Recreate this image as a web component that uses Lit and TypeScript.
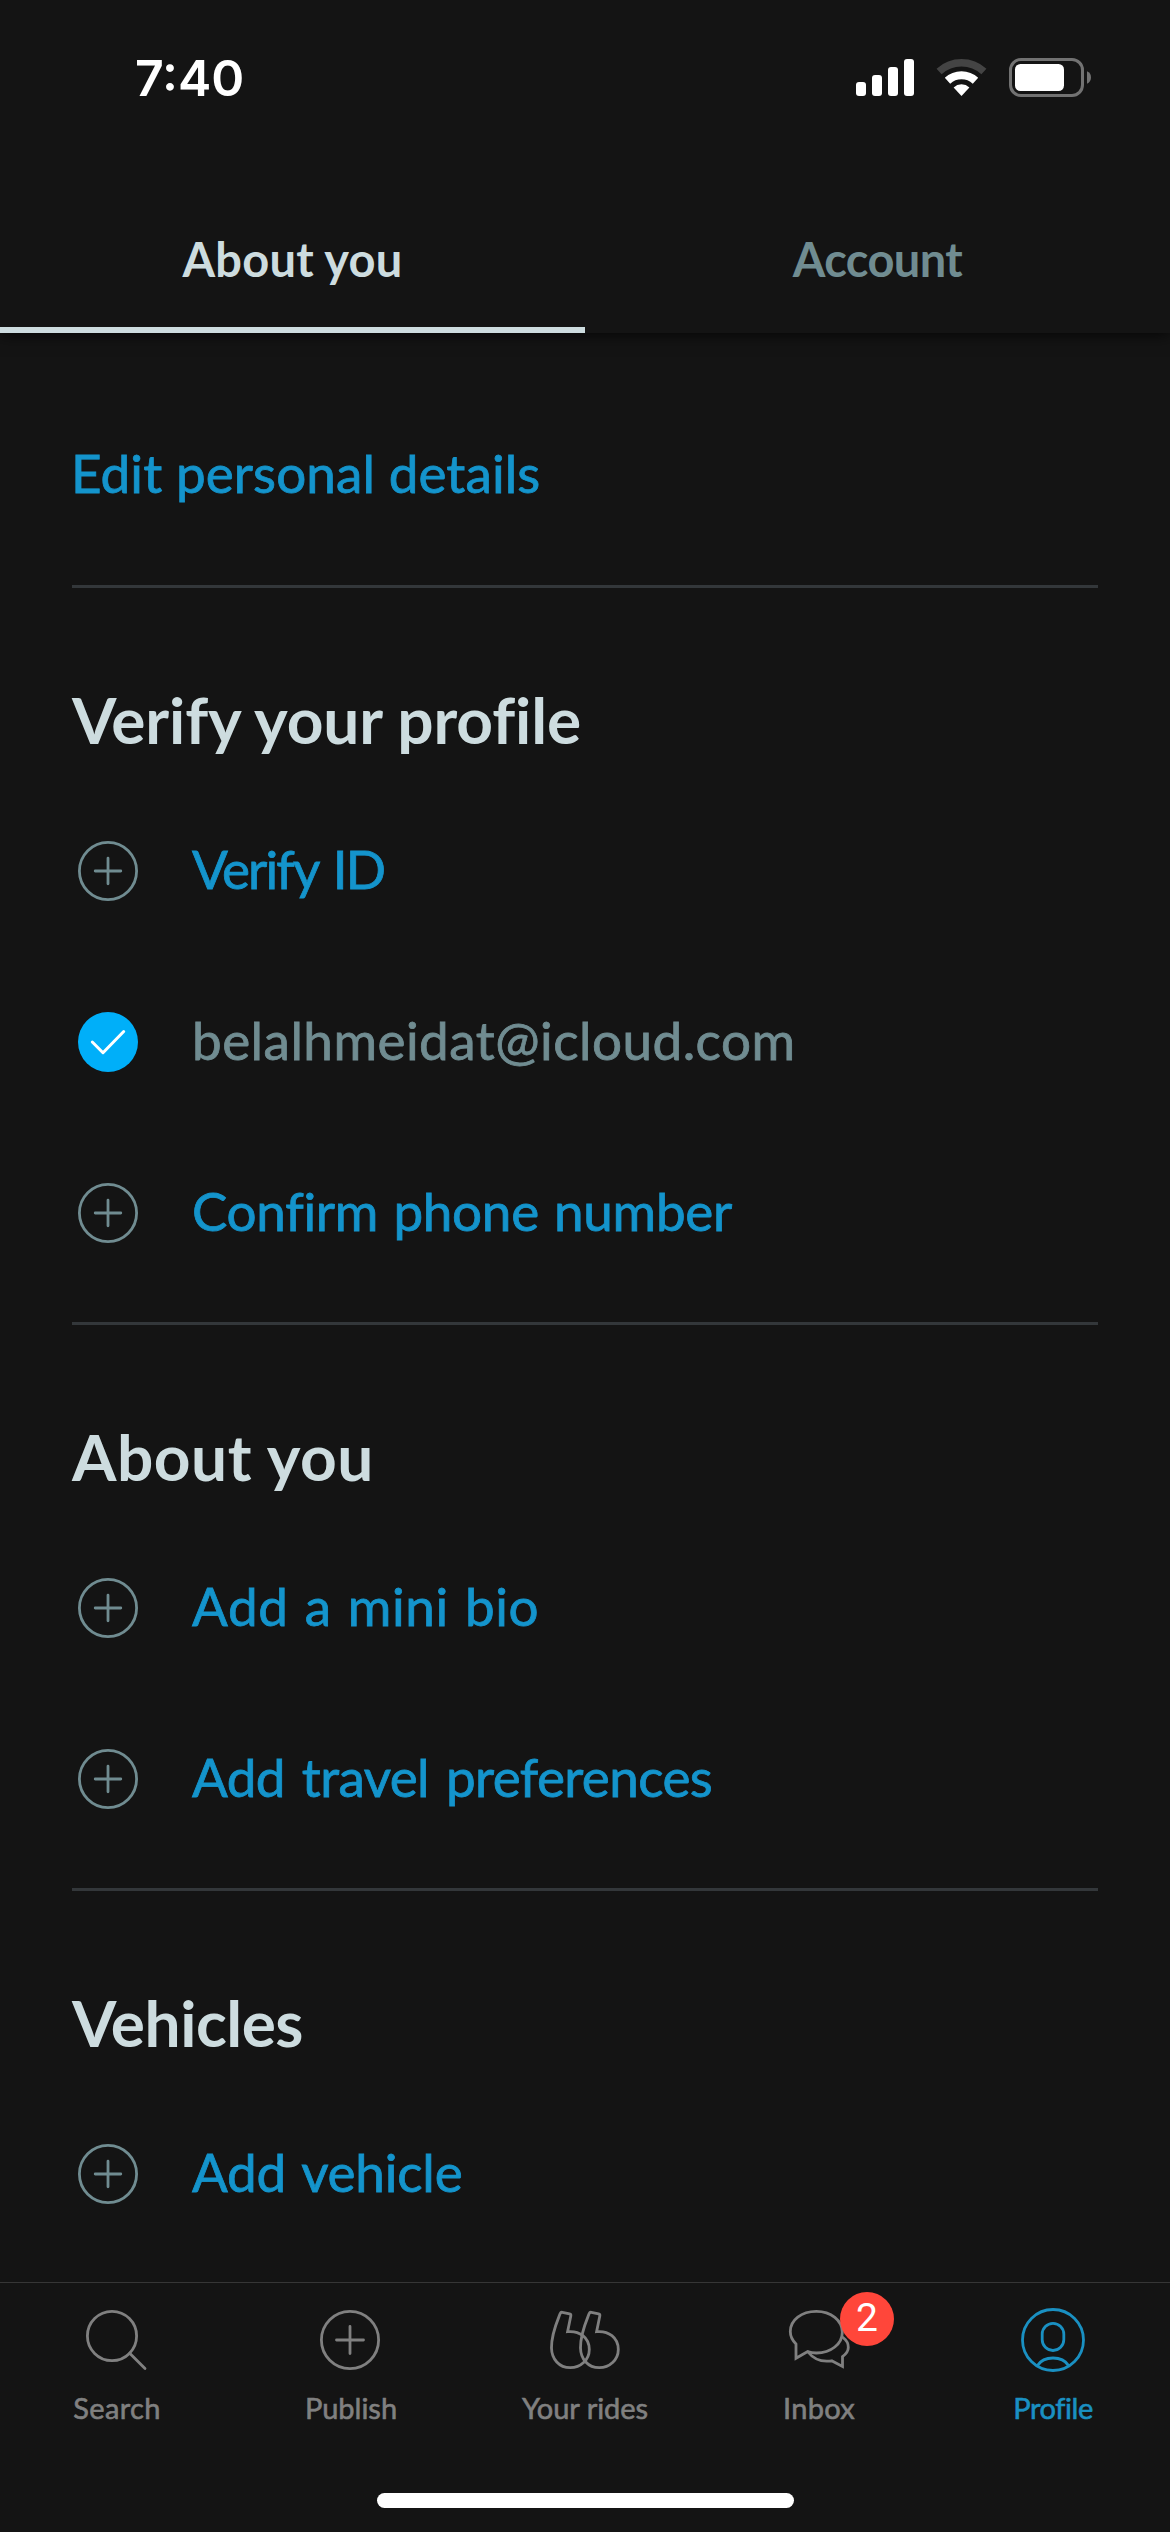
import { LitElement, html, css, svg, nothing } from "lit";
import { customElement, property, state } from "lit/decorators.js";
import { classMap } from "lit/directives/class-map.js";
import { styleMap } from "lit/directives/style-map.js";

interface Label {
  text: string;
  /** Letter spacing in px. */
  tracking: number;
  /** Extra word spacing in px. */
  wordGap?: number;
}

interface Item extends Label {
  done?: boolean;
}

interface Section {
  heading: Label;
  items: Item[];
}

interface NavEntry extends Label {
  icon: string;
  badge?: number;
}

const label = ({ text, tracking, wordGap = 0 }: Label, classes: string) =>
  html`<span class=${classes} style=${styleMap({ letterSpacing: `${tracking}px`, wordSpacing: `${wordGap}px` })}>${text}</span>`;

const plusIcon = html`
  <svg class="icon" width="60" height="60" viewBox="0 0 60 60" fill="none" stroke="currentColor" stroke-width="2.8" stroke-linecap="round">
    <circle cx="30" cy="30" r="28.6"></circle>
    <path d="M30 17.2v25.6M17.2 30h25.6"></path>
  </svg>`;

const checkIcon = html`
  <svg class="icon" width="60" height="60" viewBox="0 0 60 60" fill="none">
    <circle cx="30" cy="30" r="30" fill="#00aff9"></circle>
    <path d="M14.3 30 25 40.7 45.7 19.5" stroke="#fff" stroke-width="3" stroke-linecap="round" stroke-linejoin="round"></path>
  </svg>`;

const quoteShape =
  "M11.2 9.6Q11.8 8 13.4 8.3L20.600 9.800Q22.200 10.200 21.800 12L18.600 27.700C30.500 26.500 40.300 33.500 40.300 45.500C40.300 56 31.500 63.700 21.300 63.700C10 63.700 2.700 55 2.500 44C2.300 30 7.500 19 11.200 9.600Z";

const navIcons: Record<string, unknown> = {
  search: svg`<circle cx="31" cy="32" r="24.6"></circle><path d="M48.700 49.300 64 64.500"></path>`,
  publish: svg`<circle cx="35" cy="36" r="28.600"></circle><path d="M35 22.500v27M21.500 36h27"></path>`,
  rides: svg`<path d=${quoteShape}></path><path transform="translate(29 0)" d=${quoteShape}></path>`,
  inbox: svg`
    <path d="M13 40C9 36 7.300 32 7.300 27.500C7.300 16 18.500 7.300 33.300 7.300C48 7.300 59.300 16.500 59.300 28.200C59.300 40 48 49 33.300 49C30 49 27.500 48.600 24.700 47.600L13 54.300Z"></path>
    <path d="M60 33.500C64 36.500 65.400 39.500 65.300 43.500C65.300 47 63 50 59.500 52.700V62.500L48.700 56.800C39 58.300 30.500 55 25 48"></path>`,
  profile: svg`
    <circle cx="36" cy="36" r="30.500"></circle>
    <rect x="25.200" y="19.300" width="21.600" height="27.200" rx="10.800"></rect>
    <path d="M20.500 61.500C24 56 29 54 36 54S48 56 51.500 61.500"></path>`,
};

@customElement("status-bar")
export class StatusBar extends LitElement {
  static styles = css`
    :host {
      display: flex;
      box-sizing: border-box;
      height: 141px;
      padding: 48px 79px 0 135px;
      align-items: flex-start;
      justify-content: space-between;
    }
    .time {
      font: 600 50px/60px Inter, "Liberation Sans", sans-serif;
    }
    .indicators {
      display: flex;
      gap: 22px;
      padding-top: 10px;
    }
    svg {
      display: block;
    }
  `;

  render() {
    return html`
      <span class="time">7:40</span>
      <div class="indicators">
        <svg width="58" height="40" viewBox="0 0 58 40" fill="#fff">
          <rect x="0" y="24" width="10" height="14" rx="3"></rect>
          <rect x="16" y="17" width="10" height="21" rx="3"></rect>
          <rect x="32" y="9" width="10" height="29" rx="3"></rect>
          <rect x="48" y="1" width="10" height="37" rx="3"></rect>
        </svg>
        <svg width="51" height="40" viewBox="0 0 51 40" fill="none" stroke="#fff">
          <path d="M3.100 13.500A33.200 33.200 0 0 1 47.900 13.500" stroke="#444" stroke-width="7.500"></path>
          <path d="M11.500 22.700A20.700 20.700 0 0 1 39.500 22.700" stroke-width="8"></path>
          <path d="M25.500 38 17.600 29.400A11.700 11.700 0 0 1 33.400 29.400Z" fill="#fff" stroke="none"></path>
        </svg>
        <svg width="82" height="40" viewBox="0 0 82 40">
          <rect x="1.500" y="1.500" width="72" height="36" rx="10.500" fill="none" stroke="#727272" stroke-width="3"></rect>
          <rect x="6" y="6" width="49" height="27" rx="5.500" fill="#fff"></rect>
          <path d="M78 13.300C80.500 14.300 82 16.500 82 19.500S80.500 24.700 78 25.700Z" fill="#727272"></path>
        </svg>
      </div>
    `;
  }
}

@customElement("tab-header")
export class TabHeader extends LitElement {
  @state() private active = 0;

  private tabs: Label[] = [
    { text: "About you", tracking: 0.2 },
    { text: "Account", tracking: -0.6 },
  ];

  static styles = css`
    :host {
      display: flex;
      height: 192px;
      box-shadow: 0 0 16px rgba(0, 0, 0, 0.9);
      clip-path: inset(0 0 -40px 0);
      background: #141414;
    }
    .tab {
      flex: 1;
      box-sizing: border-box;
      padding-top: 88px;
      border-bottom: 6px solid transparent;
      text-align: center;
      font-size: 47px;
      line-height: 60px;
      font-weight: 700;
      color: #708c91;
      cursor: pointer;
    }
    .active {
      color: #cddcdf;
      border-color: #cddcdf;
    }
  `;

  render() {
    return this.tabs.map(
      (tab, i) => html`
        <div class=${classMap({ tab: true, active: i === this.active })} @click=${() => (this.active = i)}>
          ${label(tab, "text")}
        </div>`
    );
  }
}

@customElement("profile-section")
export class ProfileSection extends LitElement {
  @property({ attribute: false }) section!: Section;

  static styles = css`
    :host {
      display: block;
      border-top: 3px solid #33373a;
      padding: 90px 0 23px;
    }
    .heading {
      margin: 0 0 24px;
      line-height: 84px;
      font-size: 64px;
      font-weight: 700;
      color: #cddcdf;
    }
    .row {
      display: flex;
      align-items: flex-start;
      gap: 54px;
      box-sizing: border-box;
      height: 171px;
      padding: 55px 0 0 6px;
      color: #708c91;
    }
    .label {
      margin-top: -2px;
      font-size: 53px;
      line-height: 60px;
      white-space: nowrap;
      color: #1494cc;
      -webkit-text-stroke: 0.8px currentColor;
    }
    .done {
      color: #708c91;
    }
  `;

  render() {
    const { heading, items } = this.section;
    return html`
      <h2 class="heading">${label(heading, "text")}</h2>
      ${items.map(
        (item) => html`
          <div class="row">
            ${item.done ? checkIcon : plusIcon} ${label(item, item.done ? "label done" : "label")}
          </div>`
      )}
    `;
  }
}

@customElement("bottom-nav")
export class BottomNav extends LitElement {
  @state() private active = "profile";

  private entries: NavEntry[] = [
    { icon: "search", text: "Search", tracking: 0.35 },
    { icon: "publish", text: "Publish", tracking: 0 },
    { icon: "rides", text: "Your rides", tracking: -0.05 },
    { icon: "inbox", text: "Inbox", tracking: 0.3, badge: 2 },
    { icon: "profile", text: "Profile", tracking: -0.4 },
  ];

  static styles = css`
    :host {
      display: flex;
      flex-direction: column;
      align-items: center;
      box-sizing: border-box;
      height: 250px;
      border-top: 1px solid #363636;
      background: #141414;
    }
    .entries {
      display: grid;
      grid-template-columns: repeat(5, 1fr);
      width: 100%;
      height: 210px;
    }
    .entry {
      display: flex;
      flex-direction: column;
      align-items: center;
      gap: 14px;
      padding-top: 21px;
      color: #808080;
      cursor: pointer;
    }
    .active {
      color: #1a90c2;
    }
    .glyph {
      position: relative;
      width: 72px;
      height: 72px;
    }
    .glyph svg {
      display: block;
    }
    .badge {
      position: absolute;
      left: 57px;
      top: -12px;
      width: 54px;
      height: 54px;
      border-radius: 50%;
      background: #ff463a;
      color: #fff;
      font: 400 39px/53px Roboto, "Liberation Sans", sans-serif;
      text-align: center;
    }
    .text {
      font-size: 29px;
      line-height: 36px;
      white-space: nowrap;
      -webkit-text-stroke: 0.6px currentColor;
    }
    .home {
      width: 417px;
      height: 15px;
      border-radius: 8px;
      background: #fff;
    }
  `;

  render() {
    return html`
      <nav class="entries">
        ${this.entries.map(
          (entry) => html`
            <div
              class=${classMap({ entry: true, active: entry.icon === this.active })}
              @click=${() => (this.active = entry.icon)}
            >
              <div class="glyph">
                <svg width="72" height="72" viewBox="0 0 72 72" fill="none" stroke="currentColor" stroke-width="2.8" stroke-linecap="round">
                  ${navIcons[entry.icon]}
                </svg>
                ${entry.badge ? html`<span class="badge">${entry.badge}</span>` : nothing}
              </div>
              ${label(entry, "text")}
            </div>`
        )}
      </nav>
      <div class="home"></div>
    `;
  }
}

@customElement("app-root")
export class AppRoot extends LitElement {
  private sections: Section[] = [
    {
      heading: { text: "Verify your profile", tracking: -0.1 },
      items: [
        { text: "Verify ID", tracking: -1.9, wordGap: 4 },
        { text: "belalhmeidat@icloud.com", tracking: 0.47, done: true },
        { text: "Confirm phone number", tracking: -0.3, wordGap: 2 },
      ],
    },
    {
      heading: { text: "About you", tracking: 0.55 },
      items: [
        { text: "Add a mini bio", tracking: 0.6, wordGap: 2 },
        { text: "Add travel preferences", tracking: -0.6, wordGap: 4 },
      ],
    },
    {
      heading: { text: "Vehicles", tracking: -0.5 },
      items: [{ text: "Add vehicle", tracking: -0.2, wordGap: 3 }],
    },
  ];

  static styles = css`
    :host {
      display: flex;
      flex-direction: column;
      width: 1170px;
      height: 2532px;
      overflow: hidden;
      background: #141414;
      color: #fff;
      font-family: Lato, "Liberation Sans", sans-serif;
      font-variant-ligatures: none;
    }
    .content {
      flex: 1;
      min-height: 0;
      overflow: hidden;
      padding: 110px 72px 0;
    }
    tab-header {
      z-index: 1;
      flex: none;
    }
    .edit {
      display: block;
      margin: 0 0 82px -1px;
      font-size: 53px;
      line-height: 60px;
      color: #1494cc;
      -webkit-text-stroke: 0.8px currentColor;
    }
  `;

  render() {
    return html`
      <status-bar></status-bar>
      <tab-header></tab-header>
      <main class="content">
        ${label({ text: "Edit personal details", tracking: 0.1 }, "edit")}
        ${this.sections.map((section) => html`<profile-section .section=${section}></profile-section>`)}
      </main>
      <bottom-nav></bottom-nav>
    `;
  }
}
